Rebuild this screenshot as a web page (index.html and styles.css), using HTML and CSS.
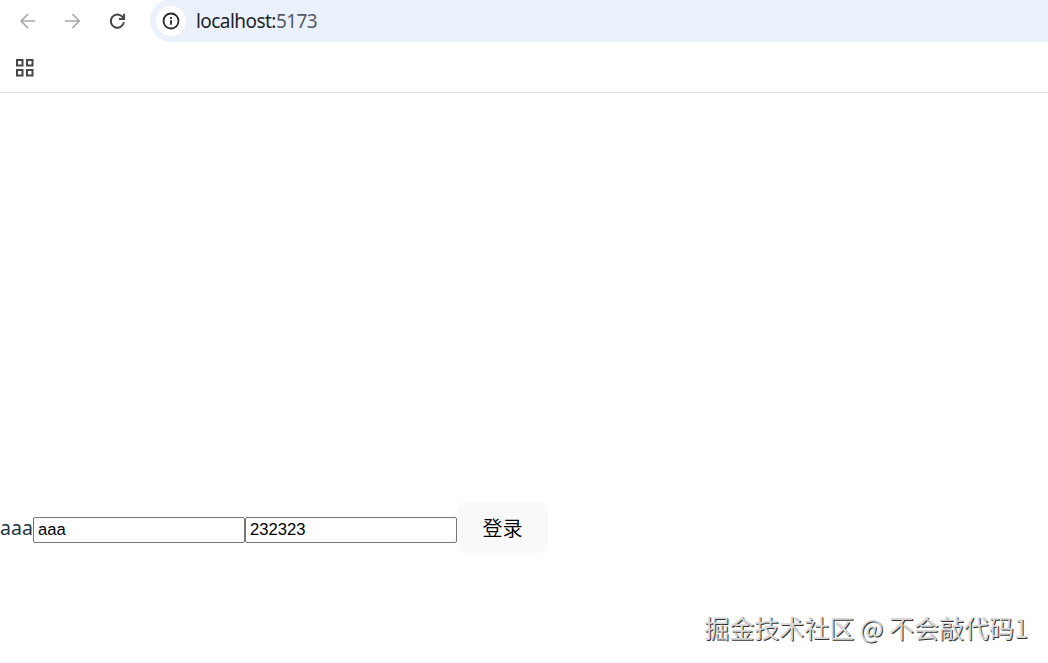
FILE: index.html
```
<!DOCTYPE html>
<html lang="zh-CN">
  <head>
    <meta charset="UTF-8">
    <title>localhost:5173</title>
    <link rel="stylesheet" href="styles.css">
  </head>
  <body>
    <header class="browser">
      <nav class="toolbar">
        <svg class="icon muted" viewBox="0 0 20 20"><path d="M17.3 10H3.3M10 3L3 10l7 7"/></svg>
        <svg class="icon muted" viewBox="0 0 20 20"><path d="M2 10h14M9.3 3l7 7-7 7"/></svg>
        <svg class="icon" viewBox="0 0 20 20"><path d="M15.9 11.2a6.6 6.6 0 1 1-1.6-5.5l1.5 1.8M16.1 2.8v5.2h-5.2"/></svg>
        <div class="address">
          <span class="site-info">
            <svg class="info" viewBox="0 0 18 18"><circle cx="9" cy="9" r="7.5"/><path d="M9 8.2v4.6M9 5v1.9"/></svg>
          </span>
          <span class="url">localhost:<span class="port">5173</span></span>
        </div>
      </nav>
      <div class="bookmarks">
        <svg class="apps" viewBox="0 0 19 19">
          <path d="M2 2h5.5v5.5H2zM12 2h5.5v5.5H12zM2 12h5.5v5.5H2zM12 12h5.5v5.5H12z"/>
        </svg>
      </div>
    </header>

    <main class="page">
      <form class="login">
        <span class="name">aaa</span>
        <input class="field" type="text" value="aaa">
        <input class="field" type="text" value="232323">
        <button class="submit" type="button">登录</button>
      </form>
    </main>

    <footer class="watermark">掘金技术社区 @ 不会敲代码1</footer>
  </body>
</html>
```

FILE: styles.css
```
* {
  box-sizing: border-box;
}

body {
  margin: 0;
  height: 100vh;
  overflow: hidden;
  display: flex;
  flex-direction: column;
  background: #fff;
  font-family: "Noto Sans", "Noto Sans CJK SC", sans-serif;
}

.browser {
  height: 93px;
  border-bottom: 1px solid #dfe0e2;
}

.toolbar {
  display: flex;
  align-items: center;
  height: 41px;
  padding-left: 18px;
}

.icon {
  width: 20px;
  height: 20px;
  margin-right: 25px;
  fill: none;
  stroke: #474747;
  stroke-width: 2;
}
  .icon.muted {
    stroke: #a9a9a9;
    stroke-width: 1.7;
  }

.address {
  display: flex;
  align-items: center;
  flex: 1;
  height: 43px;
  margin-left: -3px;
  padding-left: 6px;
  border-radius: 22px 0 0 22px;
  background: #ebf1fa;
}

.site-info {
  display: flex;
  align-items: center;
  justify-content: center;
  width: 30px;
  height: 30px;
  border-radius: 50%;
  background: #fff;
}

.info {
  width: 18px;
  height: 18px;
  fill: none;
  stroke: #292929;
  stroke-width: 1.8;
}

.url {
  margin-left: 10px;
  color: #20242a;
  font-size: 19px;
  letter-spacing: -0.55px;
}
  .port {
    color: #555a61;
  }

.bookmarks {
  display: flex;
  align-items: center;
  height: 51px;
  padding: 1px 0 0 15px;
}

.apps {
  width: 19px;
  height: 19px;
  fill: none;
  stroke: #474747;
  stroke-width: 2;
}

.page {
  flex: 1;
  display: flex;
  align-items: flex-end;
  padding-bottom: 25px;
}

.login {
  display: flex;
  align-items: center;
}

.name {
  width: 33px;
  color: #213547;
  font-size: 19.5px;
  line-height: 30px;
}

.field {
  width: 212px;
  height: 26px;
  margin: 5px 0 0;
  padding: 1px 4px;
  border: 1px solid #767676;
  border-radius: 2px;
  background: #fff;
  color: #000;
  font: 16.67px "Liberation Sans", sans-serif;
}

.submit {
  width: 91px;
  height: 51px;
  padding: 0;
  border: 0;
  border-radius: 10px;
  background: #f9f9f9;
  color: #000;
  font: 350 20px "Noto Sans CJK SC", sans-serif;
}

.watermark {
  height: 85px;
  padding: 29px 20px 0 0;
  color: #d8d8d8;
  font: 25px/40px "Noto Sans CJK SC", sans-serif;
  text-align: right;
  text-shadow: 1px 1px 0 #333;
}
```
